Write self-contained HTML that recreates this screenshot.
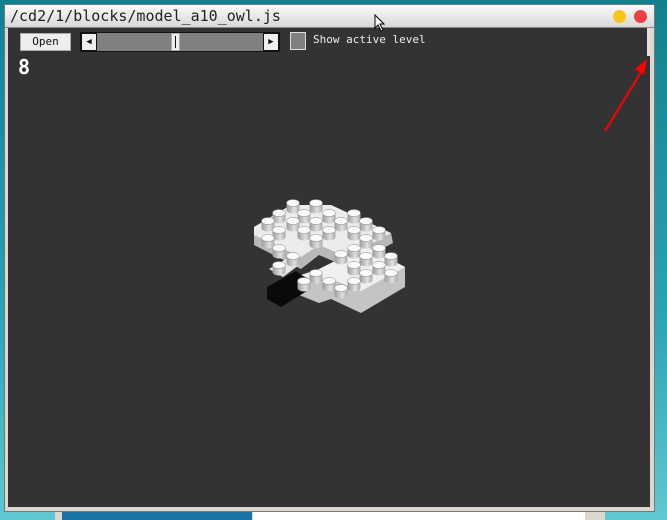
<!DOCTYPE html>
<html><head><style>
html,body{margin:0;padding:0}
body{width:667px;height:520px;overflow:hidden;position:relative;background:linear-gradient(180deg,#11808e 0%,#2aa3b2 60%,#5fc8d2 100%);font-family:"DejaVu Sans Mono","Liberation Mono",monospace}
.win{position:absolute;left:4px;top:4px;width:651px;height:508px;background:#dcd8d0;border:1px solid #777;box-sizing:border-box}
.title{position:absolute;left:0;top:0;right:0;height:22px;background:linear-gradient(#fafafa,#d8d8d8);border-bottom:1px solid #888}
.title span{position:absolute;left:5px;top:2px;font-size:15px;color:#222;font-family:"DejaVu Sans Mono",monospace}
.dot{position:absolute;top:5px;width:13px;height:13px;border-radius:50%}
.content{position:absolute;left:3px;top:23px;width:642px;height:479px;background:#333}
.btn{position:absolute;background:#eee;border:1px solid #aaa;font-size:11px;color:#111;text-align:center;box-sizing:border-box}
</style></head><body>
<div style="position:absolute;left:55px;top:510px;width:550px;height:10px;background:#dcd8d0"></div>
<div style="position:absolute;left:62px;top:512px;width:190px;height:8px;background:#1a72a5"></div>
<div style="position:absolute;left:253px;top:512px;width:332px;height:8px;background:#fff"></div>
<div class="win">
 <div class="title"><span>/cd2/1/blocks/model_a10_owl.js</span>
  <div class="dot" style="left:608px;background:#f7c51c"></div>
  <div class="dot" style="left:629px;background:#f03e45"></div>
 </div>
 <div class="content">
  <div class="btn" style="left:12px;top:5px;width:51px;height:18px;line-height:16px">Open</div>
  <div style="position:absolute;left:72px;top:4px;width:200px;height:20px;background:#808080;border:1px solid #111;box-sizing:border-box"></div>
  <div class="btn" style="left:73px;top:5px;width:16px;height:18px;line-height:16px;font-size:9px;border-color:#111">◀</div>
  <div class="btn" style="left:255px;top:5px;width:16px;height:18px;line-height:16px;font-size:9px;border-color:#111">▶</div>
  <div class="btn" style="left:163px;top:5px;width:9px;height:18px;"><div style="width:1px;height:12px;background:#111;margin:2px auto"></div></div>
  <div style="position:absolute;left:282px;top:4px;width:16px;height:18px;background:#808080;border:1px solid #ddd;box-sizing:border-box"></div>
  <div style="position:absolute;left:305px;top:5px;font-size:11px;color:#eee">Show active level</div>
  <div style="position:absolute;left:10px;top:27px;font-size:20px;font-weight:bold;color:#fff">8</div>
  <div style="position:absolute;right:0;top:0;width:3px;height:28px;background:#e4e0d8"></div>
  <svg style="position:absolute;left:0;top:0" width="642" height="479" viewBox="7 27 642 479">
   <defs>
    <linearGradient id="g" x1="0" x2="1"><stop offset="0" stop-color="#9a9a9a"/><stop offset="0.6" stop-color="#e0e0e0"/><stop offset="1" stop-color="#aaa"/></linearGradient>
   </defs>
   <polygon points="253,226 290,204 330,204 390,232 392,242 346,266 318,254 300,268 253,244" fill="#b8b8b8"/>
   <polygon points="253,226 290,204 330,204 390,232 346,256 318,244 300,256 253,234" fill="#ececec"/>
   <polygon points="330,262 366,246 404,266 404,286 360,312 330,298 318,302 298,294 300,280 318,274" fill="#c4c4c4"/>
   <polygon points="330,262 366,246 404,266 360,290 330,278 318,282 300,274 318,268" fill="#f0f0f0"/>
   <polygon points="266,286 295,270 306,278 306,290 280,306 266,298" fill="#0a0a0a"/>
   <polygon points="268,268 285,258 298,264 282,276" fill="#e8e8e8"/>
   <g id="studs"></g>
   <line x1="604" y1="130" x2="642" y2="68" stroke="#f00" stroke-width="2"/>
   <polygon points="646,58 643,74 634,68" fill="#f00"/>
  </svg>
 </div>
</div>
<svg style="position:absolute;left:374px;top:14px" width="12" height="18"><polygon points="1,1 1,14 4,11 7,17 9,16 6,10 10,10" fill="#fff" stroke="#000" stroke-width="1"/></svg>
<script>
var pts=[[292,205],[315,205],[278,215],[303,215],[328,215],[353,215],[267,223],[292,223],[315,223],[340,223],[365,223],[278,232],[303,232],[328,232],[353,232],[378,232],[267,240],[315,240],[365,240],[278,250],[353,250],[378,250],[292,258],[340,256],[365,258],[390,258],[278,267],[353,267],[378,267],[315,275],[365,275],[390,275],[303,283],[328,283],[353,283],[340,290]];
var s='';pts.forEach(function(p){var x=p[0],y=p[1];
s+='<path d="M'+(x-6.5)+','+(y-3)+' L'+(x-6.5)+','+(y+4)+' A6.5,3.5 0 0 0 '+(x+6.5)+','+(y+4)+' L'+(x+6.5)+','+(y-3)+' Z" fill="url(#g)"/>';
s+='<ellipse cx="'+x+'" cy="'+(y-3)+'" rx="6.5" ry="3.5" fill="#fbfbfb" stroke="#888" stroke-width="0.5"/>';});
document.getElementById('studs').innerHTML=s;
</script>
</body></html>
